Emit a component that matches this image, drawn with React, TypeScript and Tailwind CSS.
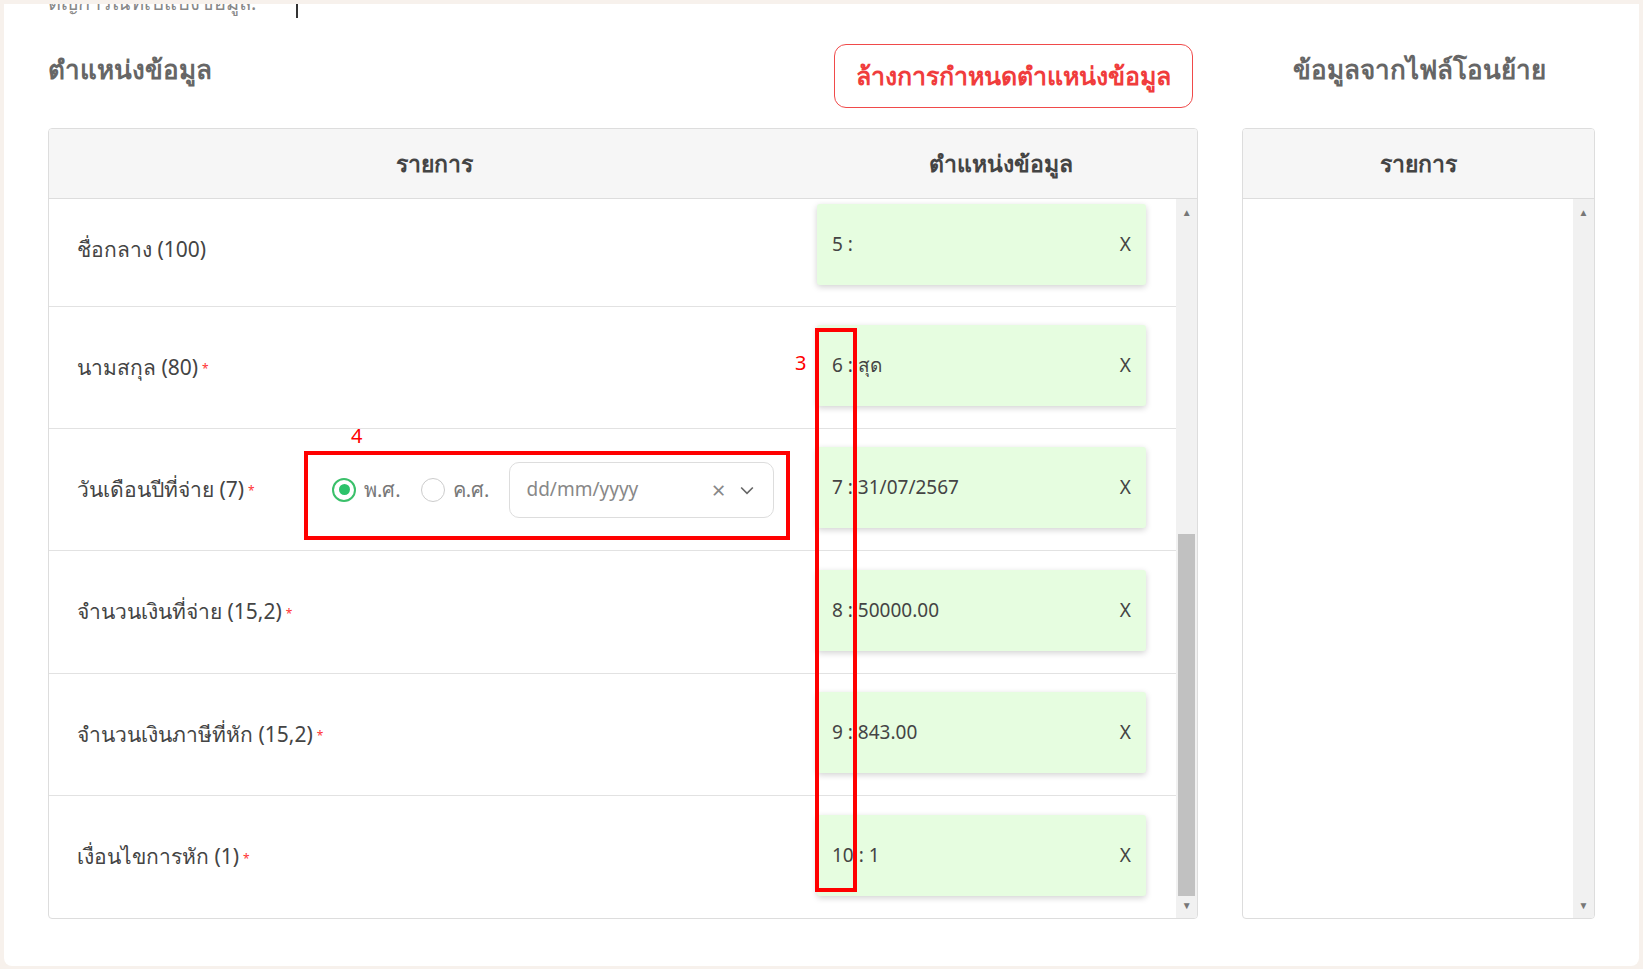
const rows = [
  { label: "ชื่อกลาง (100)", req: false, value: "5 :", h: "h-[108px]" },
  { label: "นามสกุล (80)", req: true, value: "6 : สุด", h: "h-[122px]" },
  { label: "วันเดือนปีที่จ่าย (7)", req: true, value: "7 : 31/07/2567", h: "h-[122px]", date: true },
  { label: "จำนวนเงินที่จ่าย (15,2)", req: true, value: "8 : 50000.00", h: "h-[123px]" },
  { label: "จำนวนเงินภาษีที่หัก (15,2)", req: true, value: "9 : 843.00", h: "h-[122px]" },
  { label: "เงื่อนไขการหัก (1)", req: true, value: "10 : 1", h: "h-[122px]" },
];

function DateCell() {
  return (
    <div className="flex items-center gap-3">
      <span className="flex items-center gap-2">
        <span className="w-[24px] h-[24px] rounded-full border-2 border-[#3ac06a] flex items-center justify-center">
          <span className="w-[11px] h-[11px] rounded-full bg-[#2cc26a]" />
        </span>
        <span className="text-[20px] text-[#777]">พ.ศ.</span>
      </span>
      <span className="flex items-center gap-2 ml-2">
        <span className="w-[24px] h-[24px] rounded-full border border-[#ccc]" />
        <span className="text-[20px] text-[#777]">ค.ศ.</span>
      </span>
      <div className="ml-2 w-[265px] h-[56px] rounded-[10px] border border-[#ddd] flex items-center px-4 text-[19px] text-[#888]">
        <span className="flex-1">dd/mm/yyyy</span>
        <span className="text-[24px] text-[#888] mr-3">×</span>
        <svg width="20" height="20" viewBox="0 0 24 24" fill="none" stroke="#666" strokeWidth="2"><path d="M5 9l7 7 7-7" /></svg>
      </div>
    </div>
  );
}

function ScrollBar({ thumb }: { thumb: boolean }) {
  return (
    <div className="w-[21px] bg-[#f1f1f1] flex flex-col items-center">
      <span className="text-[10px] text-[#777] leading-none mt-2">▲</span>
      <div className="flex-1 w-full flex flex-col">
        <div className="flex-1" />
        {thumb && <div className="h-[362px] mx-[2px] bg-[#c1c1c1]" />}
      </div>
      <span className="text-[10px] text-[#777] leading-none mb-2 mt-1">▼</span>
    </div>
  );
}

export default function App() {
  return (
    <div className="w-[1643px] h-[969px] bg-[#f7f1ec] pt-[4px] px-[4px] font-['Noto_Sans','Liberation_Sans',sans-serif] overflow-hidden">
      <div className="bg-white h-[962px] rounded-b-[8px] relative px-[44px]">
        <div className="h-[20px] flex items-start overflow-hidden">
          <span className="text-[20px] text-[#888] -mt-[16px]">ตัญการณที่เปิแบ่งข้อมูล:</span>
          <span className="ml-[40px] w-[2px] h-[14px] bg-[#333]" />
        </div>
        <div className="flex items-start mt-[24px]">
          <div className="w-[1151px] flex items-start justify-between">
            <h2 className="text-[26px] font-bold text-[#666] mt-[2px]">ตำแหน่งข้อมูล</h2>
            <button className="mr-[6px] -mt-[4px] w-[359px] h-[64px] rounded-[12px] border border-[#f04a4a] text-[#f03c3c] text-[25px] font-semibold">
              ล้างการกำหนดตำแหน่งข้อมูล
            </button>
          </div>
          <div className="flex-1 ml-[44px] text-center text-[26px] font-bold text-[#666] mt-[2px]">ข้อมูลจากไฟล์โอนย้าย</div>
        </div>
        <div className="flex mt-[20px]">
          <div className="w-[1151px] h-[791px] border border-[#ddd] rounded-[4px] flex flex-col overflow-hidden">
            <div className="h-[70px] bg-[#f6f6f6] border-b border-[#ddd] flex items-center text-[23px] font-semibold text-[#444]">
              <div className="w-[770px] text-center">รายการ</div>
              <div className="flex-1 text-center pr-[14px]">ตำแหน่งข้อมูล</div>
            </div>
            <div className="flex flex-1">
              <div className="flex-1 flex flex-col">
                {rows.map((r, i) => (
                  <div key={i} className={`${r.h} flex items-center ${i < rows.length - 1 ? "border-b border-[#e2e2e2]" : ""}`}>
                    <div className={`w-[768px] pl-[28px] flex items-center ${i === 0 ? "-mt-[6px]" : ""}`}>
                      <span className="text-[21px] text-[#444] w-[185px] shrink-0 whitespace-nowrap">
                        {r.label}
                        {r.req && <span className="text-[#f33] text-[12px] ml-1 align-middle">*</span>}
                      </span>
                      {r.date && <div className="ml-[70px]"><DateCell /></div>}
                    </div>
                    <div className={`w-[329px] h-[81px] bg-[#e6fde0] rounded-[3px] shadow-[0_2px_6px_rgba(0,0,0,0.18)] flex items-center justify-between px-[15px] text-[19px] text-[#444] ${i === 0 ? "-mt-[16px]" : "-mt-[4px]"}`}>
                      <span>{r.value}</span>
                      <span>X</span>
                    </div>
                  </div>
                ))}
              </div>
              <ScrollBar thumb />
            </div>
          </div>
          <div className="ml-[44px] w-[353px] h-[791px] border border-[#ddd] rounded-[4px] flex flex-col overflow-hidden">
            <div className="h-[70px] bg-[#f6f6f6] border-b border-[#ddd] flex items-center justify-center text-[23px] font-semibold text-[#444]">รายการ</div>
            <div className="flex flex-1">
              <div className="flex-1" />
              <ScrollBar thumb={false} />
            </div>
          </div>
        </div>
        {/* annotations */}
        <div className="absolute left-[811px] top-[324px] w-[42px] h-[564px] border-[4px] border-[#f00]" />
        <span className="absolute left-[791px] top-[344px] text-[20px] text-[#f00]">3</span>
        <div className="absolute left-[300px] top-[447px] w-[486px] h-[89px] border-[4px] border-[#f00]" />
        <span className="absolute left-[347px] top-[417px] text-[20px] text-[#f00]">4</span>
      </div>
    </div>
  );
}
